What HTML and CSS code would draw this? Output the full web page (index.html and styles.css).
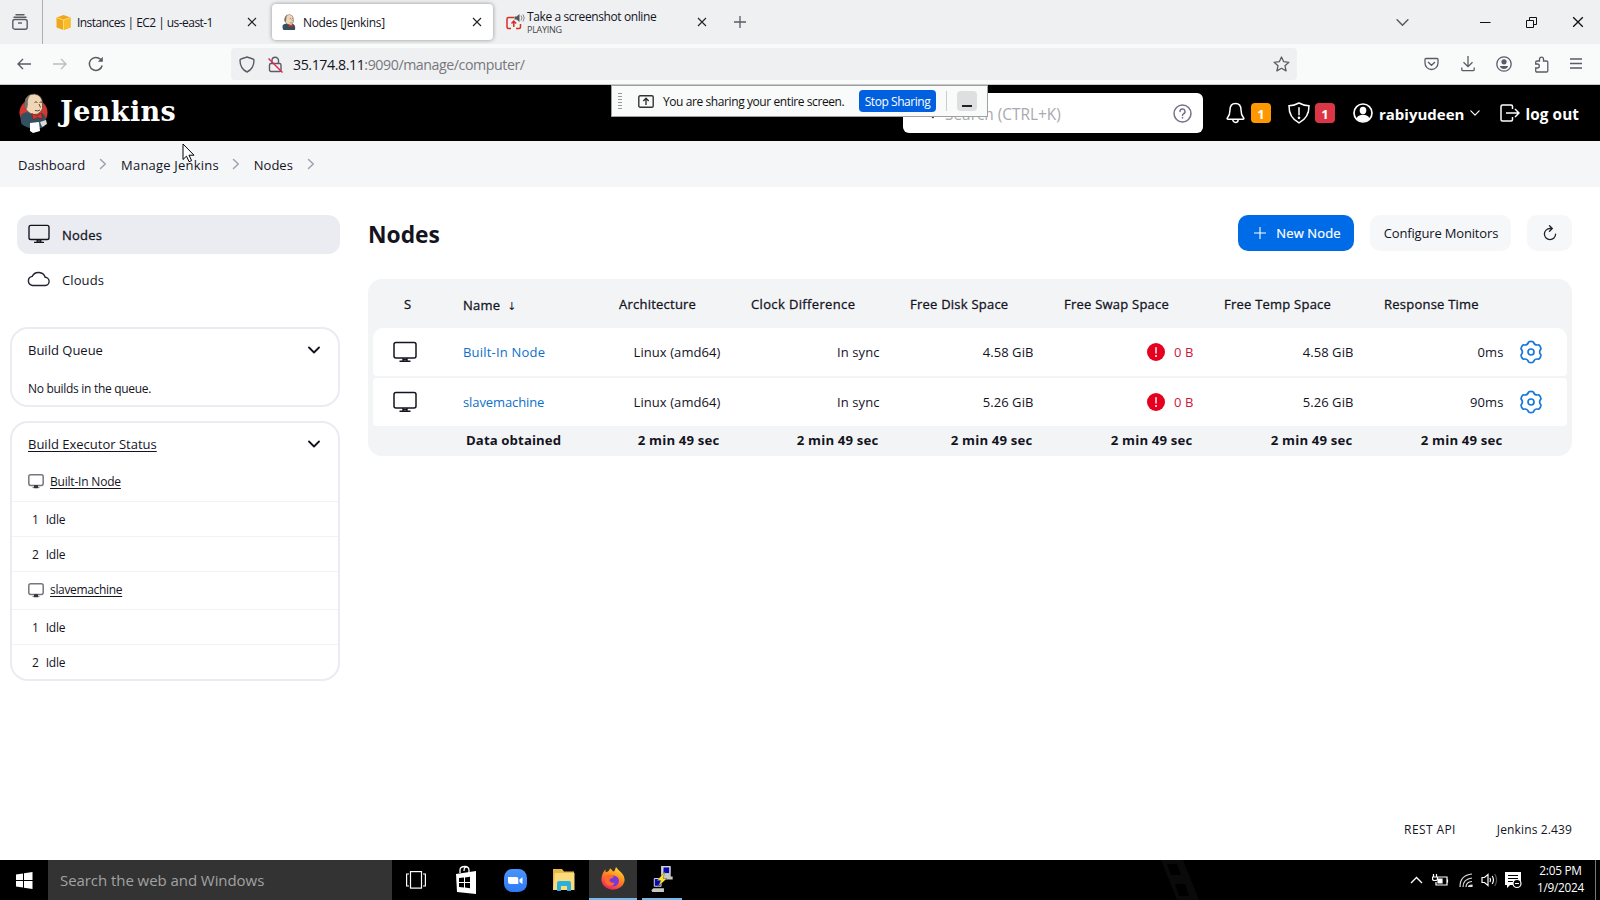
FILE: index.html
```html
<!DOCTYPE html>
<html lang="en">
<head>
<meta charset="utf-8">
<title>Nodes [Jenkins]</title>
<link rel="stylesheet" href="styles.css">
</head>
<body>
<svg class="defs" aria-hidden="true">
  <symbol id="x" viewBox="0 0 10 10"><path d="M1 1l8 8M9 1L1 9" fill="none" stroke="currentColor" stroke-width="1.1"/></symbol>
  <symbol id="chev" viewBox="0 0 12 12"><path d="M1 3.500l5 5 5-5" fill="none" stroke="currentColor" stroke-width="var(--sw,1.4)" stroke-linecap="round" stroke-linejoin="round"/></symbol>
  <symbol id="crumb" viewBox="0 0 8 12"><path d="M1.500 1.500L6.300 6l-4.800 4.500" fill="none" stroke="#a0a0b0" stroke-width="1.500" stroke-linecap="round" stroke-linejoin="round"/></symbol>
  <symbol id="monitor" viewBox="0 0 24 22"><rect x="1" y="1.500" width="22" height="15.500" rx="2" fill="none" stroke="currentColor" stroke-width="1.500"/><path d="M10 17v3M14 17v3M6.500 20.300h11M10.500 18.500h3" fill="none" stroke="currentColor" stroke-width="1.400"/></symbol>
  <symbol id="monitor-s" viewBox="0 0 16 15"><rect x=".8" y=".8" width="14.400" height="10.600" rx="1.800" fill="none" stroke="#77777f" stroke-width="1.500"/><path d="M4.500 13.500h7" stroke="#888890" stroke-width="1.200"/><rect x="6" y="11.200" width="4" height="3" fill="#333340"/></symbol>
  <symbol id="cog" viewBox="0 0 22 24"><path d="M8.600 1.900Q11 .7 13.400 1.900Q14.500 5.800 18.700 4.800Q20.800 6.300 21 8.900Q18.200 12 21 15.100Q20.800 17.700 18.700 19.200Q14.500 18.200 13.400 22.100Q11 23.300 8.600 22.100Q7.500 18.200 3.300 19.200Q1.200 17.700 1 15.100Q3.800 12 1 8.900Q1.200 6.300 3.300 4.800Q7.500 5.800 8.600 1.900z" fill="none" stroke="currentColor" stroke-width="1.700" stroke-linejoin="round"/><circle cx="11" cy="12" r="3" fill="none" stroke="currentColor" stroke-width="1.700"/></symbol>
  <symbol id="alert" viewBox="0 0 18 18"><circle cx="9" cy="9" r="9" fill="#e6001f"/><path d="M9 4.700v5.300" stroke="#fff" stroke-width="1.400" stroke-linecap="round"/><circle cx="9" cy="13" r="1" fill="#fff"/></symbol>
  <symbol id="bust" viewBox="0 0 30 40">
    <path d="M2 22q3-3 8-3l7 5 6-4q4 2 4 8l-1 5q-4 3-10 3Q7 35 2.500 31 1 27 2 22z" fill="#335061"/>
    <path d="M6 9Q7 1 15.500 1q8 1 8 10 1 5-2 8-3 3-7 2.500Q8 20 6 14z" fill="#f0d6b7" stroke="#554536" stroke-width=".8"/>
    <path d="M5.500 14Q5 6 9.500 3l2-1Q8 6 9 11l-1 5z" fill="#77716c"/>
    <path d="M15.500 9.500q1.500-1.500 3 0M20.500 9.500q1.500-1.200 2.500 0M20 11l1.500 3.500M16 17.500q3 1 5-.5" fill="none" stroke="#49392c" stroke-width=".9"/>
    <path d="M13 20.500l5 2.500 4.500-3 .8 6-4.800-1.500-4.500 2z" fill="#d33833" stroke="#81100d" stroke-width=".5"/>
  </symbol>
</svg>

<header class="tabs">
  <div class="recent"><svg width="16" height="16" viewBox="0 0 16 16" fill="none" stroke="#5b5b66" stroke-width="1.400"><path d="M4 .8h8M2 3.300h12" stroke-linecap="round"/><rect x=".8" y="5.500" width="14.400" height="9.700" rx="2"/><path d="M6 9h4"/></svg></div>
  <div class="tab first">
    <svg width="15" height="15" viewBox="0 0 15 15"><path d="M7.500 0L14.500 2.500v10l-7 2.500-7-2.500v-10z" fill="#f0a818"/><path d="M7.500 5L14.500 2.500v10l-7 2.500z" fill="#f8bd28"/><path d="M.5 2.500L7.500 5v10M7.500 5l7-2.500" fill="none" stroke="#ffe29a" stroke-width=".8"/></svg>
    <span class="t1">Instances | EC2 | us-east-1</span><svg class="close" width="10" height="10"><use href="#x"/></svg>
  </div>
  <div class="tab active">
    <svg width="16" height="16" viewBox="1 0 27 32"><use href="#bust" width="30" height="40"/></svg>
    <span class="t2">Nodes [Jenkins]</span><svg class="close" width="10" height="10"><use href="#x"/></svg>
  </div>
  <div class="tab third">
    <svg width="19" height="17" viewBox="0 0 19 17"><path d="M8 3.500H2.500Q1 3.500 1 5v8q0 1.500 1.500 1.500H5M10 14.500h3q1.500 0 1.500-1.500v-3" fill="none" stroke="#d92d20" stroke-width="1.500"/><path d="M7.800 13V7.500M5.500 9.500l2.300-2.400 2.300 2.400" fill="none" stroke="#d92d20" stroke-width="1.500"/><path d="M8.500 2.500h2L13.500 0v8l-3-2.500h-2z" fill="#555"/><path d="M15 1.500q2 2.500 0 5M17 .5q2.500 3.500 0 7" fill="none" stroke="#888"/></svg>
    <div class="two"><span class="t3">Take a screenshot online</span><small>PLAYING</small></div><svg class="close" width="10" height="10"><use href="#x"/></svg>
  </div>
  <svg class="plus" width="12" height="12" viewBox="0 0 12 12"><path d="M6 0v12M0 6h12" stroke="#5b5b66" stroke-width="1.300"/></svg>
  <div class="window">
    <svg width="13" height="13" class="grey"><use href="#chev"/></svg>
    <svg class="min" width="11" height="11"><path d="M0 5.500h10.500" stroke="#111"/></svg>
    <svg width="11" height="11" viewBox="0 0 11 11" fill="none" stroke="#111"><path d="M.5 3.500h7v7h-7zM3.500 3V.5h7v7H8"/></svg>
    <svg width="12" height="12"><use href="#x"/></svg>
  </div>
</header>

<div class="toolbar">
  <svg class="nav" width="14" height="12" viewBox="0 0 14 12" fill="none" stroke="#5b5b66" stroke-width="1.400"><path d="M14 6H1M6 1L1 6l5 5"/></svg>
  <svg class="nav" width="14" height="12" viewBox="0 0 14 12" fill="none" stroke="#bdbdc2" stroke-width="1.400"><path d="M0 6h13M8 1l5 5-5 5"/></svg>
  <svg class="nav reload" width="16" height="16" viewBox="0 0 16 16" fill="none" stroke="#5b5b66" stroke-width="1.500"><path d="M14.200 9.500A6.500 6.500 0 1 1 12.500 3.300L14 5"/><path d="M14.800.8v5H9.800z" fill="#5b5b66" stroke="none"/></svg>
  <div class="url">
    <svg width="16" height="17" viewBox="0 0 16 17" fill="none" stroke="#5b5b66" stroke-width="1.400"><path d="M8 1l6 2q1 .3 1 1.300 0 8.500-7 11.700Q1 12.800 1 4.300 1 3.300 2 3z"/></svg>
    <svg class="lock" width="15" height="17" viewBox="0 0 15 17" fill="none" stroke="#5b5b66" stroke-width="1.400"><rect x="1.500" y="7.500" width="11.500" height="8" rx="1.500"/><path d="M4 7.500V4.500a3.200 3.200 0 0 1 6.500 0v3"/><path d="M.5 2.500l14 14" stroke="#e22850" stroke-width="1.500"/></svg>
    <span class="addr">35.174.8.11<i>:9090/manage/computer/</i></span>
    <svg class="star" width="17" height="16" viewBox="0 0 17 16" fill="none" stroke="#5b5b66" stroke-width="1.300" stroke-linejoin="round"><path d="M8.500 1l2.200 4.700 5.200.6-3.900 3.500 1.100 5.100-4.600-2.600-4.600 2.600L5 9.800 1.100 6.300l5.200-.6z"/></svg>
  </div>
  <div class="tools">
    <svg width="15" height="14" viewBox="0 0 15 14" fill="none" stroke="#5b5b66" stroke-width="1.300"><path d="M2 1.500h11q1 0 1 1V6A6.500 6.500 0 0 1 1 6V2.500q0-1 1-1zM4 5l3.500 3.300L11 5"/></svg>
    <svg width="14" height="16" viewBox="0 0 14 16" fill="none" stroke="#5b5b66" stroke-width="1.300"><path d="M7 0v10.500M2.500 6.200L7 10.700l4.500-4.500M.8 11.500v2q0 1.200 1.200 1.200h10q1.200 0 1.200-1.200v-2"/></svg>
    <svg width="16" height="16" viewBox="0 0 16 16"><circle cx="8" cy="8" r="7.200" fill="none" stroke="#5b5b66" stroke-width="1.300"/><circle cx="8" cy="5.800" r="2.600" fill="#5b5b66"/><path d="M3.800 10h8.400q-1 3-4.200 3t-4.200-3z" fill="#5b5b66"/></svg>
    <svg width="15" height="17" viewBox="0 0 15 17" fill="none" stroke="#5b5b66" stroke-width="1.300"><path d="M5.500 5V3.200a2 2 0 0 1 4 0V5h3q1.300 0 1.300 1.300v8.400q0 1.300-1.300 1.300H3q-1.300 0-1.300-1.300V12h1.600a2 2 0 0 0 0-4H1.700V6.300Q1.700 5 3 5z"/></svg>
    <svg width="12" height="12" viewBox="0 0 12 12" stroke="#5b5b66" stroke-width="1.300"><path d="M0 1h12M0 5.500h12M0 10h12"/></svg>
  </div>
</div>

<div class="page-header">
  <svg class="logo" width="30" height="40" viewBox="0 0 30 40"><ellipse cx="14.500" cy="19.500" rx="14" ry="13.500" fill="#d33833"/><use href="#bust" width="30" height="40"/><path d="M11 30l9-1 1 9-7 2-3-2z" fill="#fff"/><path d="M21 29l6-2 1 4-5 3z" fill="#dcd9d8"/></svg>
  <span class="brand">Jenkins</span>
  <div class="search">
    <svg width="18" height="18" viewBox="0 0 18 18" fill="none" stroke="#222" stroke-width="1.500"><circle cx="7.500" cy="6" r="5"/><path d="M10.500 10l4 4"/></svg>
    <span>Search (CTRL+K)</span>
    <svg class="help" width="19" height="19" viewBox="0 0 19 19" fill="none" stroke="#73738c" stroke-width="1.500"><circle cx="9.500" cy="9.500" r="8.500"/><path d="M7 7.500a2.500 2.500 0 1 1 3.500 2.300q-1 .5-1 1.700" stroke-linecap="round"/><path d="M9.500 13v1.500"/></svg>
  </div>
  <svg class="bell" width="19" height="22" viewBox="0 0 19 22" fill="none" stroke="#fff" stroke-width="1.500"><path d="M9.500 1.500C5.500 1.500 4 4.500 4 8c0 5-1 6-2.700 8-.5.700 0 1.300.7 1.300h15c.7 0 1.200-.6.700-1.300C16 14 15 13 15 8c0-3.500-1.500-6.500-5.500-6.500z"/><path d="M6.800 17.500a2.700 3 0 0 0 5.400 0"/></svg>
  <b class="badge orange">1</b>
  <svg class="shield" width="22" height="22" viewBox="0 0 22 22" fill="none" stroke="#fff" stroke-width="1.500"><path d="M11 1Q6 3.700 1 3.800q-.2 12 10 17 10.200-5 10-17Q16 3.700 11 1z"/><path d="M11 5.800v7" stroke-linecap="round"/><circle cx="11" cy="15.800" r=".6" fill="#fff"/></svg>
  <b class="badge red">1</b>
  <svg class="user" width="20" height="20" viewBox="0 0 20 20"><circle cx="10" cy="10" r="9" fill="none" stroke="#fff" stroke-width="1.700"/><ellipse cx="10" cy="7.500" rx="3.300" ry="3.700" fill="#fff"/><path d="M3.500 15.500q1.500-3.700 6.500-3.700t6.500 3.700Q14 18.500 10 18.500t-6.500-3z" fill="#fff"/></svg>
  <b class="uname">rabiyudeen</b>
  <svg class="uchev" width="10" height="10"><use href="#chev"/></svg>
  <svg class="out" width="20" height="18" viewBox="0 0 20 18" fill="none" stroke="#fff" stroke-width="1.500"><path d="M12.500 5V2.500Q12.500 1 11 1H2.500Q1 1 1 2.500v13Q1 17 2.500 17H11q1.500 0 1.500-1.500V13M6 9h13M15 5l4 4-4 4"/></svg>
  <b class="logout">log out</b>
</div>

<nav class="crumbs">
  <span>Dashboard</span><svg width="8" height="12"><use href="#crumb"/></svg>
  <span class="manage">Manage Jenkins</span><svg width="8" height="12"><use href="#crumb"/></svg>
  <span>Nodes</span><svg width="8" height="12"><use href="#crumb"/></svg>
</nav>

<div class="content">
  <aside>
    <div class="task selected"><svg width="22" height="20"><use href="#monitor"/></svg><span>Nodes</span></div>
    <div class="task"><svg width="23" height="17" viewBox="0 0 23 17" fill="none" stroke="#222230" stroke-width="1.400"><path d="M5.500 15.500h12.300a4.100 4.100 0 0 0 .4-8.200A6.900 6.500 0 0 0 5.200 6.400a4.600 4.600 0 0 0 .3 9.100z"/></svg><span>Clouds</span></div>
    <section class="pane queue">
      <div class="pane-head"><span class="qt">Build Queue</span><svg width="12" height="12"><use href="#chev"/></svg></div>
      <p>No builds in the queue.</p>
    </section>
    <section class="pane exec">
      <div class="pane-head"><u>Build Executor Status</u><svg width="12" height="12"><use href="#chev"/></svg></div>
      <div class="node top"><svg width="16" height="15"><use href="#monitor-s"/></svg><u class="n1">Built-In Node</u></div>
      <div class="idle"><span>1</span><span>Idle</span></div>
      <div class="idle"><span>2</span><span>Idle</span></div>
      <div class="node"><svg width="16" height="15"><use href="#monitor-s"/></svg><u class="n2">slavemachine</u></div>
      <div class="idle"><span>1</span><span>Idle</span></div>
      <div class="idle"><span>2</span><span>Idle</span></div>
    </section>
  </aside>
  <main>
    <div class="title">
      <h1>Nodes</h1>
      <div class="btn primary"><svg width="12" height="12" viewBox="0 0 12 12"><path d="M6 0v12M0 6h12" stroke="#fff" stroke-width="1.100"/></svg><span>New Node</span></div>
      <div class="btn conf"><span>Configure Monitors</span></div>
      <div class="btn refresh"><svg width="14" height="16" viewBox="0 0 14 16" fill="none" stroke="#222230" stroke-width="1.300" stroke-linecap="round" stroke-linejoin="round"><path d="M9 3.500H7a5.600 5.600 0 1 0 5.600 5.600M6.500.8l2.800 2.700-2.800 2.800"/></svg></div>
    </div>
    <div class="table">
      <div class="row head"><span class="s">S</span><span class="name">Name<em>↓</em></span><span>Architecture</span><span class="clk">Clock Difference</span><span>Free Disk Space</span><span>Free Swap Space</span><span>Free Temp Space</span><span>Response Time</span><span></span></div>
      <div class="row body one"><span class="icon"><svg width="24" height="22"><use href="#monitor"/></svg></span><span class="link wide">Built-In Node</span><span>Linux (amd64)</span><span>In sync</span><span>4.58 GiB</span><span class="err"><svg width="18" height="18"><use href="#alert"/></svg>0 B</span><span>4.58 GiB</span><span>0ms</span><span class="gear"><svg width="22" height="24"><use href="#cog"/></svg></span></div>
      <div class="row body"><span class="icon"><svg width="24" height="22"><use href="#monitor"/></svg></span><span class="link">slavemachine</span><span>Linux (amd64)</span><span>In sync</span><span>5.26 GiB</span><span class="err"><svg width="18" height="18"><use href="#alert"/></svg>0 B</span><span>5.26 GiB</span><span>90ms</span><span class="gear"><svg width="22" height="24"><use href="#cog"/></svg></span></div>
      <div class="row foot"><span></span><span>Data obtained</span><span>2 min 49 sec</span><span>2 min 49 sec</span><span>2 min 49 sec</span><span>2 min 49 sec</span><span>2 min 49 sec</span><span>2 min 49 sec</span><span></span></div>
    </div>
    <footer><span class="rest">REST API</span><span class="ver">Jenkins 2.439</span></footer>
  </main>
</div>

<div class="taskbar">
  <div class="start"><svg width="17" height="17" viewBox="0 0 17 17" fill="#fff"><path d="M0 2.400L7 1.400V8H0zM8 1.200L16.500 0v8H8zM0 9h7v6.500l-7-1zM8 9h8.500v8L8 15.700z"/></svg></div>
  <div class="winsearch">Search the web and Windows</div>
  <div class="app"><svg width="20" height="18" viewBox="0 0 20 18" fill="none" stroke="#fff" stroke-width="1.200"><rect x="4.500" y="0.600" width="11" height="16.500"/><path d="M3 3H.6v12H3M17 3h2.400v12H17"/></svg></div>
  <div class="app next"><svg width="22" height="30" viewBox="0 0 22 30"><path d="M5 8V5q0-3.500 5-3.500 4 0 4 4V8M9 6q0-5 4-3.500" fill="none" stroke="#fff" stroke-width="1.300"/><path d="M1 9l20-3v23L2 27z" fill="#fff"/><path d="M4 13l5-.5V17H4zM10 12.400l5-.6V17h-5zM4 18h5v4.500L4 22zM10 18h5v5.200l-5-.6z" fill="#000"/></svg></div>
  <div class="app"><svg width="23" height="23" viewBox="0 0 23 23"><defs><linearGradient id="zg" x2="0" y2="1"><stop stop-color="#4a94fb"/><stop offset="1" stop-color="#2d7af5"/></linearGradient></defs><rect width="23" height="23" rx="8.500" fill="url(#zg)"/><path d="M4 8h8.500q1.800 0 1.800 1.800V15H6q-2 0-2-2zM15.500 10.500l3-2.300v6.800l-3-2z" fill="#fff"/></svg></div>
  <div class="app"><svg width="22" height="24" viewBox="0 0 22 24"><path d="M0 1h9l2 2.500h10v18H0z" fill="#e9b848"/><path d="M2 5h19.500v17H0z" fill="#fbdc7d"/><path d="M4 23v-8q0-2 2-2h10q2 0 2 2v8h-4v-5H8v5z" fill="#2bb0dc"/></svg></div>
  <div class="app current"><svg width="24" height="25" viewBox="0 0 24 28" preserveAspectRatio="none"><defs><linearGradient id="fg" x1=".8" y1="0" x2=".3" y2="1"><stop stop-color="#ffe13c"/><stop offset=".45" stop-color="#ff8a1d"/><stop offset="1" stop-color="#ef1f66"/></linearGradient></defs><path d="M15 0q2 3 5 6 4 4 3.500 10A11.700 11.500 0 0 1 .5 16Q0 8 4.500 2.500V6L7 5Q9 3 9 1.500 11 3 12 5q2 0 2-2z" fill="url(#fg)"/><circle cx="12" cy="15.500" r="6" fill="#7a38d8"/><path d="M5 10q5-3 8 1l-2 1.500q-3 .5-2.500 3 1 3 5 2-1 4-5 3.500Q4 20 4 15z" fill="#ff6a2a"/></svg></div>
  <div class="app running"><svg width="23" height="29" viewBox="0 0 23 30"><path d="M10 1h10v11H10zM0 26l2-2h11v4H1zM11 12h11v3H12z" fill="#c8c8c0"/><path d="M12 2h7v7h-7zM3 14h7v8H3z" fill="#0808b8" stroke="#ddd"/><path d="M14 7l-8 9h4l-3 6 9-8h-4z" fill="#ffe928" stroke="#555" stroke-width=".5"/></svg></div>
  <svg class="film" width="40" height="40" viewBox="0 0 40 40"><path d="M0 0h22l16 40H16z" fill="#0a0a0a"/><path d="M6 4h10l4 11H10zM14 24h10l4 12H18z" fill="#000"/></svg>
  <div class="tray">
    <svg class="up" width="13" height="8" viewBox="0 0 13 8"><path d="M1 7l5.500-5.500L12 7" fill="none" stroke="#fff" stroke-width="1.400"/></svg>
    <svg width="17" height="12" viewBox="0 0 17 12" fill="none" stroke="#fff" stroke-width="1.200"><path d="M5 3h10v8H4V8M15.500 5.500v3M1.500 0v3M4.500 0v3M.5 3h5v2q0 1.500-2.500 1.500T.5 5z"/><path d="M6 5h4v4H6z" fill="#fff"/></svg>
    <svg width="14" height="14" viewBox="0 0 14 14" fill="none" stroke="#ddd" stroke-width="1.200"><path d="M1 14Q1 2 13 1M4 14q0-8 9-9M7 14q0-5 6-5.500" /><path d="M9.500 14q0-2 3.500-2v2z" fill="#fff"/></svg>
    <svg class="vol" width="17" height="14" viewBox="0 0 17 14" fill="none" stroke="#fff" stroke-width="1.200"><path d="M1 4.500h2.500l3.500-3v11L3.500 9.500H1zM9 5q1 2 0 4M11.200 3q2.500 4 0 8"/><path d="M13.800 1q3.500 6 0 12" stroke="#555"/></svg>
    <svg class="note" width="17" height="17" viewBox="0 0 17 17"><path d="M0 0h16v13H5l-3 3v-3H0z" fill="#fff"/><path d="M3 3.500h10M3 6.500h10M3 9.500h5" stroke="#000"/><circle cx="12" cy="11.500" r="4" fill="#000" stroke="#fff" stroke-width="1.200"/><path d="M10 11.500h4" stroke="#fff"/></svg>
    <div class="clock"><span class="time">2:05 PM</span><span class="date">1/9/2024</span></div>
    <i class="peek"></i>
  </div>
</div>

<div class="share">
  <i class="grip"></i>
  <svg width="16" height="13" viewBox="0 0 16 13" fill="none" stroke="#333" stroke-width="1.400"><rect x=".8" y=".8" width="14.400" height="11.400" rx="1.300"/><path d="M8 10V3.500M5.300 6L8 3.200 10.700 6"/></svg>
  <span class="msg">You are sharing your entire screen.</span>
  <span class="stop">Stop Sharing</span>
  <i class="sep"></i><i class="mini"></i>
</div>
<svg class="cursor" width="14" height="20" viewBox="0 0 14 20"><path d="M1 1v15.500l3.500-3.300 2.600 5.500 2.500-1.100L7 12.200h5z" fill="#fff" stroke="#000"/></svg>
</body>
</html>
```
FILE: styles.css
```css
* { box-sizing: border-box; }
body { margin: 0; width: 1600px; height: 900px; overflow: hidden; display: flex; flex-direction: column; background: #fff; color: #14141f; font: 13px/20px "Open Sans", "Noto Sans", sans-serif; position: relative; }
svg { flex: none; display: block; }
span, b, u, small { white-space: nowrap; }
.defs { position: absolute; width: 0; height: 0; }

/* Browser tabs */
.tabs { height: 44px; flex: none; background: #eff0f2; display: flex; align-items: center; font-size: 12px; }
.recent { width: 43px; height: 44px; border-right: 1px solid #b0b0b4; padding: 14px 0 0 12px; }
.tab { width: 221px; height: 36px; margin-right: 4px; border-radius: 4px; display: flex; align-items: center; padding-left: 9px; }
.tab.first { margin-left: 4px; }
.tab > span { margin-left: 6px; padding-top: 2px; }
.t1 { letter-spacing: -.55px; }
.t2 { letter-spacing: -.33px; }
.t3 { letter-spacing: -.4px; }
.close { margin-left: auto; margin-right: 11px; color: #222; }
.active { background: #fff; box-shadow: 0 0 4px rgba(0,0,0,.4); }
.two { display: flex; flex-direction: column; margin-left: 2px; line-height: 15px; padding-top: 1px; }
.two small { font-size: 9px; line-height: 12px; color: #444; letter-spacing: -.25px; }
.plus { margin-left: 12px; }
.window { margin-left: auto; display: flex; align-items: center; gap: 35px; margin-right: 16px; color: #111; }
.grey { color: #5b5b66; }
.min { margin-left: 36px; }

/* Address bar */
.toolbar { height: 41px; flex: none; background: #f9fafa; border-bottom: 1px solid #c8c8c8; display: flex; align-items: center; padding-left: 17px; }
.nav { margin-right: 21.5px; }
.url { width: 1066px; height: 32px; margin-left: 105.5px; background: #eff0f2; border-radius: 4px; display: flex; align-items: center; padding: 0 7px 0 8px; font-size: 14.2px; }
.lock { margin: 0 10px 0 13px; }
.addr { letter-spacing: -.43px; padding-top: 2px; }
.addr i { font-style: normal; color: #77777c; }
.star { margin-left: auto; }
.tools { margin-left: auto; margin-right: 18px; display: flex; align-items: center; gap: 21.4px; }

/* Jenkins header */
.page-header { height: 56px; flex: none; background: #000; color: #fff; display: flex; align-items: center; padding-left: 19px; }
.brand { font: bold 27px/40px "DejaVu Serif", serif; letter-spacing: .4px; margin-left: 11px; width: 118px; padding-bottom: 2px; }
.search { width: 300px; height: 40px; margin-left: 725px; background: #fff; border-radius: 6px; display: flex; align-items: center; padding: 0 11px 0 16px; color: #a9a9b0; font-size: 15.4px; }
.search span { margin-left: 8px; padding-top: 4px; }
.help { margin-left: auto; }
.bell { margin-left: 23px; }
.badge { width: 20px; height: 20px; border-radius: 4px; margin-left: 6px; text-align: center; font-size: 13px; line-height: 22px; }
.orange { background: #ff9800; }
.red { background: #dc3545; margin-left: 5px; }
.shield { margin-left: 17px; }
.user { margin-left: 18px; }
.uname, .logout { font-size: 15px; margin-left: 6px; padding-top: 2px; }
.logout { font-size: 15.300px; letter-spacing: .1px; margin-left: 5px; }
.uchev { margin-left: 6px; }
.out { margin-left: 20px; }

.crumbs { height: 46px; flex: none; background: #f5f6f8; display: flex; align-items: center; padding: 2px 0 0 18px; }
.crumbs svg { margin: -3px 14px 0 14px; }
.crumbs .manage { letter-spacing: .2px; margin-right: -1px; }

/* Page body */
.content { flex: 1; min-height: 0; display: flex; }
aside { width: 368px; padding: 28px 28px 0 10px; }
.task { height: 39px; margin: 0 0 6px 7px; border-radius: 12px; display: flex; align-items: center; padding-left: 11px; }
.task span { margin-left: 12px; letter-spacing: .1px; }
.task svg { margin-top: -2px; }
.task:not(.selected) { padding-left: 10px; }
.selected { background: #ebecf2; -webkit-text-stroke: .3px #14141f; }
.selected span { letter-spacing: .25px; }
.pane { border: 2px solid #ebecf2; border-radius: 18px; width: 330px; }
.pane-head { display: flex; justify-content: space-between; align-items: center; height: 40px; padding: 1px 18px 0 16px; --sw: 1.8; }
.queue { height: 80px; margin-top: 28px; }
.queue p { margin: 10px 0 0 16px; font-size: 12px; line-height: 20px; letter-spacing: -.3px; }
.exec { height: 260px; margin-top: 14px; font-size: 12px; letter-spacing: -.2px; }
.exec .pane-head { font-size: 13px; letter-spacing: 0; }
u { text-underline-offset: 2px; text-decoration-thickness: 1px; }
.node { height: 38px; display: flex; align-items: center; padding: 0 0 1px 16px; }
.node u { margin-left: 6px; }
.n2 { letter-spacing: -.33px; }
.idle { height: 35px; border-top: 1px solid #f1f2f6; display: flex; align-items: center; gap: 7px; padding-left: 20px; padding-top: 2px; }
.idle + .node { border-top: 1px solid #f1f2f6; }
main { flex: 1; padding: 28px 28px 0 0; display: flex; flex-direction: column; }
.title { display: flex; height: 36px; }
h1 { margin: 0 auto 0 0; font-size: 22.800px; line-height: 40px; }
.btn { height: 36px; border-radius: 10px; background: #f6f7f9; display: flex; align-items: center; justify-content: center; }
.primary { width: 116px; background: #006be6; color: #fff; -webkit-text-stroke: .2px #fff; letter-spacing: .12px; gap: 10px; margin-right: 16px; padding-left: 3px; }
.conf { width: 141px; margin-right: 16px; letter-spacing: -.17px; padding-left: 1px; }
.refresh { width: 45px; }
.table { margin-top: 28px; height: 177px; background: #f3f4f6; border-radius: 14px; padding: 0 5px; }
.row { display: grid; grid-template-columns: 74px 156px 132px 159px 154px 160px 160px 150px 1fr; align-items: center; }
.head { height: 49px; -webkit-text-stroke: .3px #14141f; letter-spacing: .23px; }
.head span { padding-left: 16px; padding-top: 1px; }
.head .name { padding-top: 2px; }
.head .s { padding-left: 31px; }
.head .clk { letter-spacing: .36px; }
.head em { font-style: normal; font-family: "DejaVu Sans", sans-serif; font-size: 11px; line-height: 1; margin-left: 7px; -webkit-text-stroke: 0; }
.body { height: 48px; background: #fff; border-radius: 4px; margin-bottom: 2px; }
.body.one { border-radius: 10px 10px 4px 4px; }
.body span { text-align: right; padding-right: 14.5px; letter-spacing: .08px; }
.body .link { text-align: left; padding-left: 16px; color: #0b6fcc; letter-spacing: -.1px; }
.body .wide { letter-spacing: .2px; }
.body .icon { padding: 0 0 0 20px; }
.body .err { display: flex; justify-content: flex-end; align-items: center; gap: 9px; color: #c8193c; }
.body .gear { padding: 0 0 0 2px; color: #1878dc; }
.foot { height: 26px; font-weight: 700; font-size: 13.2px; letter-spacing: .17px; }
.foot span { text-align: right; padding-right: 15.5px; margin-top: -2px; }
.foot span:nth-child(2) { text-align: left; padding-left: 19px; letter-spacing: .1px; }
footer { margin-top: auto; height: 40px; display: flex; justify-content: flex-end; gap: 41px; font-size: 12px; }
.rest { letter-spacing: .4px; }
.ver { letter-spacing: .13px; }

/* Windows taskbar */
.taskbar { height: 40px; flex: none; background: #000; display: flex; color: #fff; align-items: center; }
.start { width: 48px; padding-left: 16px; }
.winsearch { width: 344px; height: 40px; background: #333; color: #a2a2a2; font-size: 15px; line-height: 40px; padding-left: 12px; letter-spacing: -.06px; }
.app { width: 48px; height: 40px; margin-right: 1px; display: flex; align-items: center; justify-content: center; }
.next { margin-left: 1px; }
.current { background: #333; border-bottom: 2px solid #76b9ed; }
.running { width: 40px; margin-left: 4px; border-bottom: 2px solid #76b9ed; }
.film { margin-left: 478px; }
.tray { margin-left: auto; display: flex; align-items: center; height: 40px; gap: 10px; }
.vol { margin-left: -2px; }
.note { margin-left: -3px; }
.up { margin-right: -1px; }
.clock { width: 57px; display: flex; flex-direction: column; align-items: center; font-size: 11.8px; line-height: 17px; letter-spacing: -.25px; padding-bottom: 2px; margin-right: -4px; }
.peek { height: 40px; width: 5px; border-left: 1px solid #777; }

/* Screen sharing indicator and pointer, above the page */
.share { position: absolute; left: 611px; top: 85px; width: 377px; height: 32px; background: #f9fafa; border: 1px solid #a0a0a0; display: flex; align-items: center; font-size: 12px; padding-left: 6px; color: #111; }
.grip { width: 4px; height: 17px; background: repeating-linear-gradient(#999 0 1px, transparent 1px 3px); margin-right: 16px; }
.msg { margin-left: 9px; padding-top: 2px; letter-spacing: -.41px; }
.stop { width: 77px; height: 22px; background: #0060df; color: #fff; border-radius: 4px; text-align: center; line-height: 24px; margin-left: auto; letter-spacing: -.45px; }
.sep { width: 1px; height: 20px; background: #ccc; margin-left: 10px; }
.mini { width: 20px; height: 20px; border-radius: 4px; background: #dedfe0; margin: 0 10px; padding: 14px 5px 0; }
.mini::before { content: ""; display: block; height: 2px; background: #222; }
.cursor { position: absolute; left: 182px; top: 143px; }
```
